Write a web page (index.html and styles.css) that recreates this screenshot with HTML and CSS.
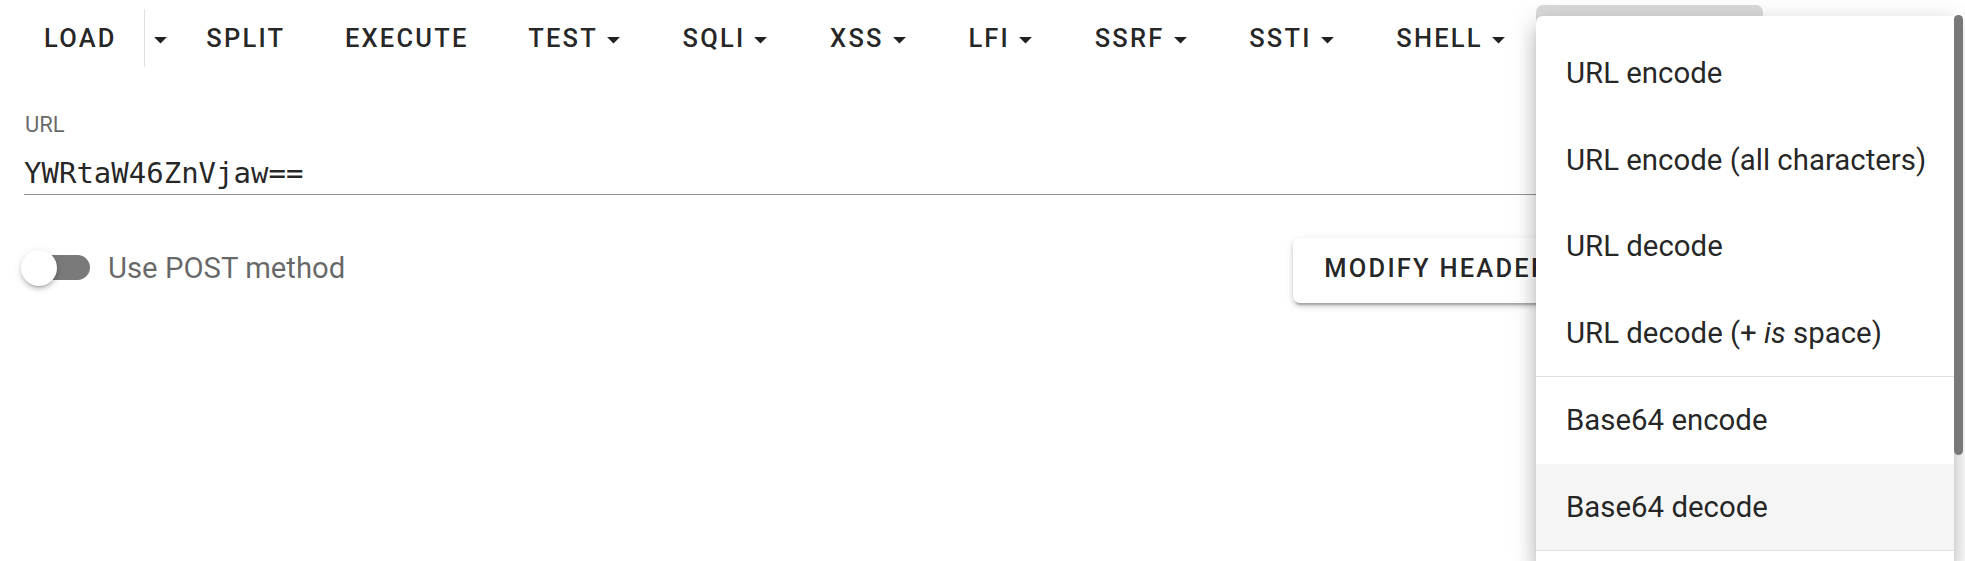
FILE: index.html
```html
<!DOCTYPE html>
<html lang="en">
<head>
<meta charset="utf-8">
<title>HackBar</title>
<link rel="stylesheet" href="styles.css">
</head>
<body>
<div class="app">
  <nav class="toolbar">
    <div class="split">
      <button class="btn">Load</button>
      <span class="vdiv"></span>
      <button class="btn btn-icon"><svg class="caret" viewBox="0 0 24 24"><path d="M7 10l5 5 5-5z"/></svg></button>
    </div>
    <button class="btn">Split</button>
    <button class="btn">Execute</button>
    <button class="btn">Test<svg class="caret" viewBox="0 0 24 24"><path d="M7 10l5 5 5-5z"/></svg></button>
    <button class="btn">SQLI<svg class="caret" viewBox="0 0 24 24"><path d="M7 10l5 5 5-5z"/></svg></button>
    <button class="btn">XSS<svg class="caret" viewBox="0 0 24 24"><path d="M7 10l5 5 5-5z"/></svg></button>
    <button class="btn">LFI<svg class="caret" viewBox="0 0 24 24"><path d="M7 10l5 5 5-5z"/></svg></button>
    <button class="btn">SSRF<svg class="caret" viewBox="0 0 24 24"><path d="M7 10l5 5 5-5z"/></svg></button>
    <button class="btn">SSTI<svg class="caret" viewBox="0 0 24 24"><path d="M7 10l5 5 5-5z"/></svg></button>
    <button class="btn">Shell<svg class="caret" viewBox="0 0 24 24"><path d="M7 10l5 5 5-5z"/></svg></button>
    <button class="btn btn-active">Encoding<svg class="caret" viewBox="0 0 24 24"><path d="M7 10l5 5 5-5z"/></svg></button>
  </nav>

  <div class="field">
    <label class="field-label">URL</label>
    <div class="field-input">YWRtaW46ZnVjaw==</div>
  </div>

  <div class="options">
    <div class="switch-col">
      <span class="switch"><span class="track"></span><span class="thumb"></span></span>
      <span class="switch-label">Use POST method</span>
    </div>
    <div class="btn-col">
      <button class="btn btn-raised">Modify Headers</button>
    </div>
  </div>

  <div class="menu">
    <div class="menu-item">URL encode</div>
    <div class="menu-item">URL encode (all characters)</div>
    <div class="menu-item">URL decode</div>
    <div class="menu-item">URL decode (+ <em>is</em> space)</div>
    <div class="menu-divider"></div>
    <div class="menu-item">Base64 encode</div>
    <div class="menu-item menu-item-hover">Base64 decode</div>
    <div class="menu-divider"></div>
  </div>
  <div class="scroll-thumb"></div>
</div>
</body>
</html>
```

FILE: styles.css
```css
html, body {
  margin: 0;
  padding: 0;
  height: 561px;
  overflow: hidden;
  background: #fff;
}

body {
  font-family: Roboto, "Liberation Sans", sans-serif;
  color: rgba(0, 0, 0, 0.87);
}

.app {
  position: relative;
  height: 561px;
  overflow: hidden;
}

.toolbar {
  display: flex;
  align-items: center;
  gap: 5.7px;
  padding: 5px 0 0 17px;
  height: 66px;
}

.split {
  display: flex;
  align-items: center;
}

.btn {
  display: inline-flex;
  align-items: center;
  height: 66px;
  padding: 2px 27px 0;
  box-sizing: border-box;
  border: 0;
  border-radius: 7px;
  background: transparent;
  font-family: Roboto, "Liberation Sans", sans-serif;
  font-weight: 500;
  font-size: 25.5px;
  line-height: 1;
  letter-spacing: 2.2px;
  text-transform: uppercase;
  color: rgba(0, 0, 0, 0.87);
  white-space: nowrap;
  cursor: pointer;
}

.btn-icon {
  padding: 2px 0 0;
  margin-right: -2px;
}

.caret {
  width: 31px;
  height: 31px;
  margin-right: -6px;
  fill: rgba(0, 0, 0, 0.87);
  flex: none;
}

.btn-icon .caret {
  margin-right: 0;
}

.vdiv {
  width: 1px;
  height: 58px;
  background: rgba(0, 0, 0, 0.12);
}

.btn-active {
  background: #dadada;
  width: 227px;
  margin-left: -5px;
}

.field {
  margin-top: 41px;
  padding: 0 20px 0 25px;
}

.field-label {
  display: block;
  font-size: 22px;
  line-height: 26px;
  color: rgba(0, 0, 0, 0.6);
}

.field-input {
  margin-top: 18px;
  margin-left: -1px;
  padding-bottom: 4px;
  border-bottom: 1px solid rgba(0, 0, 0, 0.42);
  font-family: "DejaVu Sans Mono", "Liberation Mono", monospace;
  font-size: 29px;
  line-height: 34px;
  color: rgba(0, 0, 0, 0.87);
}

.options {
  margin-top: 43px;
  display: grid;
  grid-template-columns: 2fr 1fr;
  align-items: center;
  padding-right: 25px;
}

.switch-col {
  display: flex;
  align-items: center;
  padding-left: 21px;
  margin-top: -6px;
}

.switch {
  position: relative;
  width: 69px;
  height: 36px;
  flex: none;
}

.track {
  position: absolute;
  left: 6px;
  top: 5px;
  width: 63px;
  height: 25px;
  border-radius: 13px;
  background: #7a7a7a;
}

.thumb {
  position: absolute;
  left: 0;
  top: 0;
  width: 36px;
  height: 36px;
  border-radius: 50%;
  background: #fff;
  box-shadow: 0 3px 2px -2px rgba(0, 0, 0, 0.2), 0 3px 4px 0 rgba(0, 0, 0, 0.14), 0 2px 9px 0 rgba(0, 0, 0, 0.12);
}

.switch-label {
  margin-left: 18px;
  font-size: 29.3px;
  line-height: 36px;
  color: rgba(0, 0, 0, 0.6);
}

.btn-col {
  display: flex;
}

.btn-raised {
  height: 65px;
  padding: 0 31px 3px;
  background: #fff;
  box-shadow: 0 5px 2px -3px rgba(0, 0, 0, 0.2), 0 3px 4px 0 rgba(0, 0, 0, 0.14), 0 2px 9px 0 rgba(0, 0, 0, 0.12);
}

.menu {
  position: absolute;
  left: 1536px;
  top: 16px;
  bottom: 0;
  width: 418px;
  padding-top: 14px;
  box-sizing: border-box;
  background: #fff;
  border-radius: 7px 0 0 0;
  box-shadow: 0 9px 9px -5px rgba(0, 0, 0, 0.2), 0 14px 17px 2px rgba(0, 0, 0, 0.14), 0 5px 24px 4px rgba(0, 0, 0, 0.12);
}

.menu-item {
  height: 86.5px;
  line-height: 86.5px;
  padding: 0 30px;
  font-size: 29.4px;
  color: rgba(0, 0, 0, 0.87);
  white-space: nowrap;
}

.menu-item-hover {
  background: #f5f5f5;
}

.menu-divider {
  height: 1px;
  background: rgba(0, 0, 0, 0.12);
}

.scroll-thumb {
  position: absolute;
  left: 1954px;
  top: 15px;
  width: 9px;
  height: 440px;
  border-radius: 5px;
  background: #787878;
}
```
